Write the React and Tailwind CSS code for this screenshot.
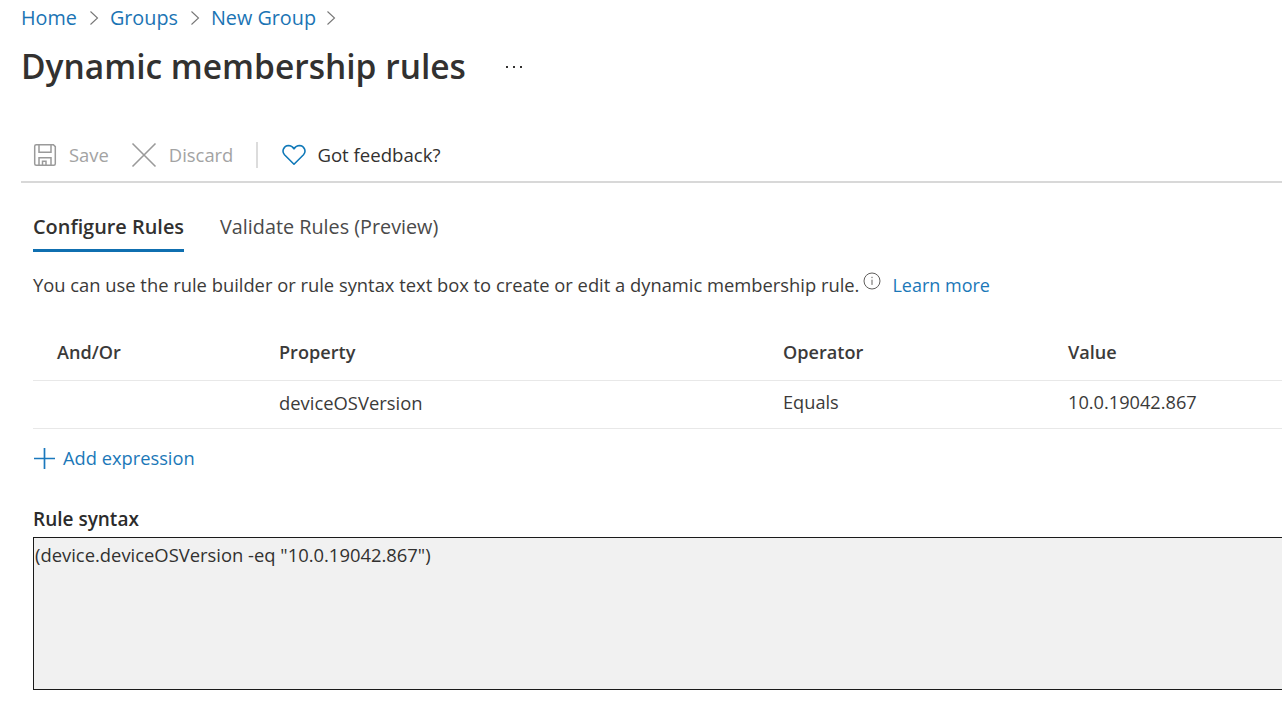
import React from "react";

const Chevron = () => (
  <svg width="12" height="18" viewBox="0 0 12 18" fill="none" stroke="#767676" strokeWidth="1.1"><path d="M2.5 2.5l7 6.5-7 6.5" /></svg>
);

const SaveIcon = () => (
  <svg width="24" height="24" viewBox="0 0 24 24" fill="none" stroke="#9a9a9a" strokeWidth="1.5">
    <path d="M1.7 3.2a1.5 1.5 0 0 1 1.5-1.5h17.2l1.9 1.9v17.2a1.5 1.5 0 0 1-1.5 1.5H3.2a1.5 1.5 0 0 1-1.5-1.5z" />
    <path d="M6 1.7v7.6h12V1.7" />
    <path d="M6 22.3v-7.6h12v7.6" />
    <path d="M9.5 22.3v-4h3.5v4" />
  </svg>
);

const XIcon = () => (
  <svg width="26" height="26" viewBox="0 0 26 26" fill="none" stroke="#9a9a9a" strokeWidth="1.6"><path d="M1.5 1.5l23 23M24.5 1.5l-23 23" /></svg>
);

const Heart = () => (
  <svg width="24" height="22" viewBox="0 0 26 23" fill="none" stroke="#0f78b8" strokeWidth="1.7" strokeLinejoin="round">
    <path d="M13 21.5L2.7 11.2A6 6 0 0 1 7 1.2c2.6 0 4.6 1.3 6 3.6 1.4-2.3 3.4-3.6 6-3.6a6 6 0 0 1 4.3 10z" />
  </svg>
);

const Info = () => (
  <svg width="18" height="18" viewBox="0 0 18 18" fill="none" stroke="#605e5c" strokeWidth="1">
    <circle cx="9" cy="9" r="8" />
    <path d="M9 7.7v5.2M9 4.8v1.3" />
  </svg>
);

const Plus = () => (
  <svg width="23" height="23" viewBox="0 0 23 23" fill="none" stroke="#1a78bd" strokeWidth="1.7"><path d="M11.5 1v21M1 11.5h21" /></svg>
);

export default function App() {
  return (
    <div className="h-[713px] w-[1282px] overflow-hidden bg-white text-[#323130] font-['Open_Sans','Noto_Sans',sans-serif]">
      <div className="flex h-[36px] items-center pl-[21px] text-[19.8px] text-[#1b74b4]">
        <span>Home</span>
        <span className="ml-[11px] mr-[10px] flex"><Chevron /></span>
        <span>Groups</span>
        <span className="ml-[11px] mr-[10px] flex"><Chevron /></span>
        <span>New Group</span>
        <span className="ml-[9px] flex"><Chevron /></span>
      </div>
      <div className="flex h-[60px] items-center pl-[21px]">
        <h1 className="text-[33.5px] font-semibold whitespace-nowrap">Dynamic membership rules</h1>
        <span className="ml-[40px] mt-[2px] flex gap-[5px]">
          <i className="h-[2px] w-[2px] bg-[#323130]" />
          <i className="h-[2px] w-[2px] bg-[#323130]" />
          <i className="h-[2px] w-[2px] bg-[#323130]" />
        </span>
      </div>
      <div className="ml-[21px] flex h-[87px] items-end border-b-2 border-[#d8d8d8] pb-[12px] pl-[12px] text-[18.4px] whitespace-nowrap">
        <div className="flex h-[28px] items-center">
          <SaveIcon />
          <span className="ml-[12px] text-[#a3a3a3]">Save</span>
          <span className="ml-[22px] flex"><XIcon /></span>
          <span className="ml-[12px] text-[#a3a3a3]">Discard</span>
          <span className="ml-[23px] h-[26px] w-[2px] bg-[#dcdcdc]" />
          <span className="ml-[24px] flex"><Heart /></span>
          <span className="ml-[11px] text-[18.6px] text-[#323130]">Got feedback?</span>
        </div>
      </div>

      <div className="pl-[33px]">
        <div className="mt-[25px] flex gap-[36px] whitespace-nowrap">
          <div className="h-[44px] border-b-[3px] border-[#0f6fb0] text-[19.9px] font-semibold leading-[38px]">Configure Rules</div>
          <div className="text-[19.8px] leading-[38px] text-[#4a4a4a]">Validate Rules (Preview)</div>
        </div>

        <div className="mt-[19px] flex h-[28px] items-center text-[18.35px] whitespace-nowrap text-[#3b3a39]">
          <span>You can use the rule builder or rule syntax text box to create or edit a dynamic membership rule.</span>
          <span className="mb-[8px] ml-[4px] flex"><Info /></span>
          <span className="ml-[11px] text-[18px] text-[#1b78b8]">Learn more</span>
        </div>

        <div className="mt-[40px] grid h-[42px] grid-cols-[246px_504px_285px_1fr] items-start border-b border-[#e8e8e8] text-[18.1px] font-semibold text-[#3b3a39] whitespace-nowrap">
          <span className="pl-[24px] leading-[26px]">And/Or</span>
          <span className="leading-[26px]">Property</span>
          <span className="leading-[26px]">Operator</span>
          <span className="leading-[26px]">Value</span>
        </div>
        <div className="grid h-[48px] grid-cols-[246px_504px_285px_1fr] items-center border-b border-[#e8e8e8] pb-[4px] text-[18.2px] text-[#3b3a39] whitespace-nowrap">
          <span />
          <span className="text-[18.4px]">deviceOSVersion</span>
          <span>Equals</span>
          <span>10.0.19042.867</span>
        </div>

        <div className="mt-[15px] flex h-[28px] items-center text-[18.3px] text-[#1b78b8] whitespace-nowrap">
          <span className="flex"><Plus /></span>
          <span className="ml-[7px]">Add expression</span>
        </div>

        <div className="mt-[34px] h-[31px] text-[19px] font-semibold leading-[26px] text-[#2b2b2b]">Rule syntax</div>
        <div className="-mr-[3px] h-[153px] border border-[#1a1a1a] bg-[#f1f1f1] pl-[1px] text-[18.4px] leading-[34px] text-[#323130] whitespace-nowrap">
          (device.deviceOSVersion -eq "10.0.19042.867")
        </div>
      </div>
    </div>
  );
}
